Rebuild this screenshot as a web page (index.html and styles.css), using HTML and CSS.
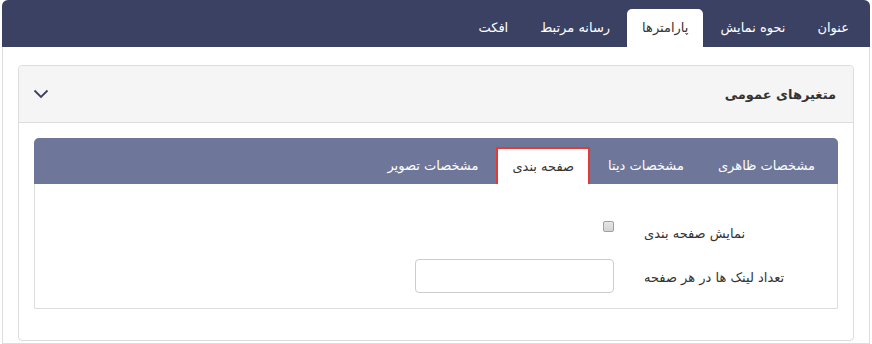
FILE: index.html
```html
<!DOCTYPE html>
<html lang="fa" dir="rtl">
<head>
    <meta charset="UTF-8">
    <meta name="viewport" content="width=device-width, initial-scale=1.0">
    <title>پارامترها</title>
    <link rel="stylesheet" href="styles.css">
</head>
<body>
    <div class="box">
        <ul class="main-tabs">
            <li>عنوان</li>
            <li>نحوه نمایش</li>
            <li class="active">پارامترها</li>
            <li>رسانه مرتبط</li>
            <li>افکت</li>
        </ul>
        <div class="box-body">
            <div class="panel">
                <div class="panel-heading">
                    <h4>متغیرهای عمومی</h4>
                    <svg class="chevron" width="16" height="10" viewBox="0 0 16 10">
                        <path d="M1.5 1.5 L8 8 L14.5 1.5" fill="none" stroke="#3a4163" stroke-width="1.8"/>
                    </svg>
                </div>
                <div class="panel-body">
                    <div class="sub-tabs-box">
                        <ul class="sub-tabs">
                            <li>مشخصات ظاهری</li>
                            <li>مشخصات دیتا</li>
                            <li class="active">صفحه بندی</li>
                            <li>مشخصات تصویر</li>
                        </ul>
                        <div class="tab-content">
                            <div class="form-row">
                                <label for="showPaging">نمایش صفحه بندی</label>
                                <div class="field">
                                    <input type="checkbox" id="showPaging" class="check">
                                </div>
                            </div>
                            <div class="form-row">
                                <label for="linkCount">تعداد لینک ها در هر صفحه</label>
                                <div class="field">
                                    <input type="text" id="linkCount" class="text-input">
                                </div>
                            </div>
                        </div>
                    </div>
                </div>
            </div>
        </div>
    </div>
</body>
</html>
```

FILE: styles.css
```css
body {
    margin: 0;
    padding: 0;
    background-color: #fff;
    font-family: "DejaVu Sans", "Noto Sans", sans-serif;
    color: #333;
}
ul {
    list-style: none;
    margin: 0;
    padding: 0;
}
.box {
    margin: 0 2px;
    border: 1px solid #ddd;
    border-top: none;
    border-radius: 6px 6px 0 0;
    height: 344px;
    box-sizing: border-box;
}
.main-tabs {
    display: flex;
    background-color: #3a4163;
    border-radius: 6px 6px 0 0;
    height: 47px;
    align-items: flex-end;
    padding-right: 6px;
    margin: 0 -1px;
}
.main-tabs li {
    color: #fff;
    font-size: 13px;
    height: 38px;
    line-height: 38px;
    padding: 0 15px;
    margin-left: 2px;
    border-radius: 5px 5px 0 0;
}
.main-tabs li.active {
    background-color: #fff;
    color: #333;
}
.box-body {
    padding: 18px 15px 0 15px;
}
.panel {
    border: 1px solid #ddd;
    border-radius: 4px;
    height: 276px;
    box-sizing: border-box;
}
.panel-heading {
    display: flex;
    justify-content: space-between;
    align-items: center;
    background-color: #f5f5f5;
    border-bottom: 1px solid #ddd;
    border-radius: 4px 4px 0 0;
    height: 56px;
    padding: 0 17px 0 14px;
}
.panel-heading h4 {
    margin: 0;
    font-size: 13px;
    font-weight: bold;
    color: #333;
}
.chevron {
    display: block;
}
.panel-body {
    padding: 15px 15px 0 15px;
}
.sub-tabs-box {
    border: 1px solid #ddd;
    border-radius: 5px 5px 0 0;
}
.sub-tabs {
    display: flex;
    align-items: flex-end;
    background-color: #6e7699;
    border-radius: 5px 5px 0 0;
    height: 46px;
    padding-right: 7px;
    margin: -1px -1px 0 -1px;
}
.sub-tabs li {
    color: #fff;
    font-size: 13px;
    height: 37px;
    line-height: 37px;
    padding: 0 16px;
    margin-left: 2px;
    box-sizing: border-box;
}
.sub-tabs li.active {
    background-color: #fff;
    color: #333;
    border: 2px solid #e53935;
    border-bottom: none;
    line-height: 35px;
    padding: 0 14px;
}
.tab-content {
    padding: 31px 31px 15px 0;
}
.form-row {
    display: flex;
    align-items: center;
    height: 34px;
    margin-bottom: 10px;
}
.form-row:last-child {
    margin-bottom: 0;
}
.form-row label {
    width: 162px;
    text-align: left;
    font-size: 13px;
    color: #333;
    margin-left: 30px;
    padding-top: 2px;
}
.field {
    width: 199px;
    display: flex;
}
.check {
    appearance: none;
    margin: 0 0 12px 0;
    width: 11px;
    height: 11px;
    border: 1px solid #a0a0a0;
    border-radius: 2px;
    background: linear-gradient(#e6e6e6, #d4d4d4);
}
.text-input {
    width: 100%;
    height: 34px;
    box-sizing: border-box;
    border: 1px solid #ccc;
    border-radius: 4px;
    padding: 6px 12px;
    font-size: 13px;
}
```
